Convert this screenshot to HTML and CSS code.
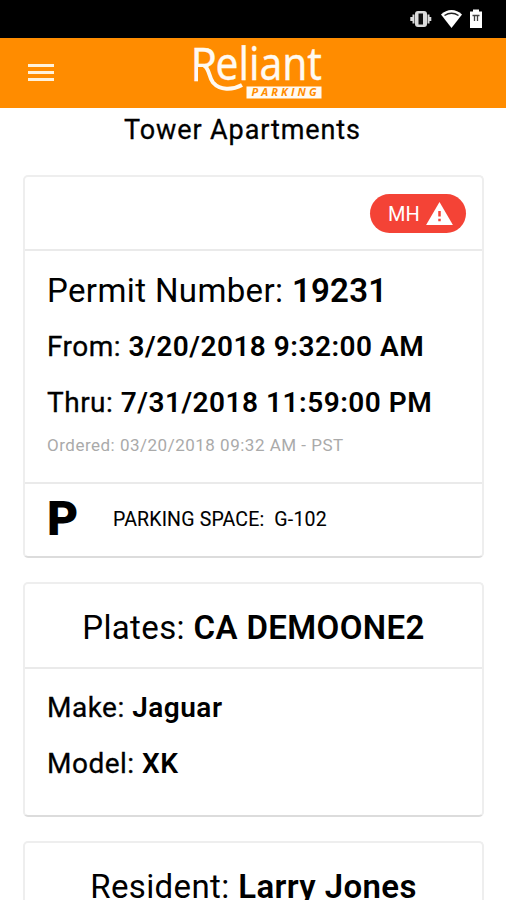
FILE: index.html
```html
<!DOCTYPE html>
<html lang="en">
<head>
<meta charset="utf-8">
<title>Reliant Parking</title>
<link rel="stylesheet" href="styles.css">
</head>
<body>
<div class="status">
  <svg class="status-icons" width="76" height="24" viewBox="410 7 76 24">
    <g fill="#dcdcdc">
      <rect x="415" y="11" width="12" height="16" rx="3"/>
      <path d="M412.500 14.500v9h2v-9zM410.300 17v4h2.200v-4zM427.500 14.500v9h2v-9zM429.500 17v4h1.800v-4z"/>
      <rect x="418.500" y="13.500" width="4.500" height="11" fill="#111"/>
    </g>
    <path fill="#fff" d="M451.500 28 441 14.500c6-6 15-6 21 0z"/>
    <path fill="none" stroke="#222" stroke-width="1.500" d="M444.500 15.500c4.500-3 9.500-3 14 0"/>
    <path fill="#fff" d="M473 9.500h6v2h3V28h-12V11.500h3z"/>
    <path fill="none" stroke="#444" stroke-width="1.300" d="M472.500 15.500h7M474.500 16v5M477.500 16v5"/>
  </svg>
</div>
<header class="bar">
  <button class="menu" aria-label="Menu"><span></span><span></span><span></span></button>
  <svg class="logo" width="136" height="64" viewBox="190 40 136 64">
    <defs>
      <clipPath id="bowl"><path d="M188 40h30v27h-20V85h-10z"/></clipPath>
    </defs>
    <g class="wordmark">
      <text x="190.500" y="80.500" textLength="27" lengthAdjust="spacingAndGlyphs" clip-path="url(#bowl)">R</text>
      <text x="215.500" y="79.500" textLength="106.500" lengthAdjust="spacingAndGlyphs">eliant</text>
    </g>
    <path class="swoosh" d="M204 65.500C210 69 208.500 77 213 82.500c7 8 19 8 29 2.500"/>
    <path fill="#fffaf2" d="M246.500 86.500h75V98.500h-75z"/>
    <text class="tag" x="251.500" y="96" textLength="65">PARKING</text>
  </svg>
</header>
<main>
  <h1 class="place">Tower Apartments</h1>
  <section class="card permit">
    <div class="flags">
      <span class="badge"><span>MH</span>
        <svg width="27" height="23" viewBox="0 0 28 24"><path fill="#fff" d="M14 0 28 24H0z"/><path stroke="#f44336" stroke-width="2.600" d="M14 9.500v5.500M14 17.500v2.700"/></svg>
      </span>
    </div>
    <div class="details">
      <p class="number">Permit Number: <b>19231</b></p>
      <p class="line">From: <b>3/20/2018 9:32:00 AM</b></p>
      <p class="line">Thru: <b>7/31/2018 11:59:00 PM</b></p>
      <p class="ordered">Ordered: 03/20/2018 09:32 AM - PST</p>
    </div>
    <div class="space"><span class="p">P</span><span class="space-text">PARKING SPACE:&nbsp; G-102</span></div>
  </section>
  <section class="card vehicle">
    <h2 class="title">Plates: <b>CA DEMOONE2</b></h2>
    <div class="details">
      <p class="line">Make: <b>Jaguar</b></p>
      <p class="line">Model: <b>XK</b></p>
    </div>
  </section>
  <section class="card resident">
    <h2 class="title">Resident: <b>Larry Jones</b></h2>
  </section>
</main>
</body>
</html>
```

FILE: styles.css
```css
* { box-sizing: border-box; }
body {
  margin: 0;
  height: 900px;
  overflow: hidden;
  background: #fff;
  color: #000;
  font-family: Roboto, sans-serif;
}
p, h1, h2 { margin: 0; font-weight: 400; white-space: nowrap; }
b { font-weight: 600; }

.status {
  height: 38px;
  padding: 7px 20px 0 0;
  background: #000;
  display: flex;
  justify-content: flex-end;
}
.bar {
  height: 70px;
  padding: 2px 0 0 28px;
  background: #ff8c00;
  display: flex;
  align-items: flex-start;
}
.menu {
  width: 26px;
  margin-top: 24px;
  padding: 0;
  border: 0;
  background: none;
  display: grid;
  gap: 4px;
}
.menu span { height: 3px; background: #fff2dc; }
.logo { margin-left: 136px; }
.wordmark {
  font: 400 45px "Noto Sans", sans-serif;
  fill: #fffaf2;
  stroke: #fffaf2;
  stroke-width: .3;
}
.swoosh { fill: none; stroke: #fffaf2; stroke-width: 4; }
.tag { font: italic 700 11px "Open Sans", sans-serif; fill: #ff8c00; }

main { height: 792px; overflow: hidden; padding: 0 22px 0 23px; }
.place {
  height: 67px;
  padding-left: 101px;
  font-size: 27px;
  line-height: 44px;
  letter-spacing: .9px;
  -webkit-text-stroke: .3px #000;
}
.card {
  margin-bottom: 24px;
  border: 2px solid #eee;
  border-bottom-color: #dcdcdc;
  border-radius: 5px;
}
.permit { height: 383px; }
.flags {
  height: 74px;
  padding: 17px 16px 0 0;
  border-bottom: 2px solid #eaeaea;
  display: flex;
  justify-content: flex-end;
}
.badge {
  width: 96px;
  height: 39px;
  padding: 0 13px 0 18px;
  border-radius: 20px;
  background: #f44336;
  color: #fff;
  display: flex;
  align-items: center;
  justify-content: space-between;
  font-size: 20px;
}
.details { padding-left: 22px; }
.number { padding: 20px 0 8px; font-size: 33px; line-height: 40px; letter-spacing: .38px; }
.number b { letter-spacing: .2px; }
.line { font-size: 28px; line-height: 56px; letter-spacing: .5px; -webkit-text-stroke: .3px #000; }
.line b { -webkit-text-stroke: 0; }
.ordered { font-size: 17px; line-height: 28px; color: #aaa; letter-spacing: .5px; }
.permit .details { height: 233px; border-bottom: 2px solid #eaeaea; }
.space { height: 70px; padding-left: 22px; display: flex; align-items: center; }
.p { width: 66px; margin-top: -2px; font-size: 48px; font-weight: 900; }
.space-text { font-size: 19.5px; letter-spacing: .17px; -webkit-text-stroke: .1px #000; }
.vehicle { height: 235px; }
.title {
  height: 85px;
  border-bottom: 2px solid #eaeaea;
  font-size: 33px;
  line-height: 88px;
  letter-spacing: .38px;
  text-align: center;
}
.vehicle .details { padding-top: 11px; }
.resident { height: 240px; }
```
